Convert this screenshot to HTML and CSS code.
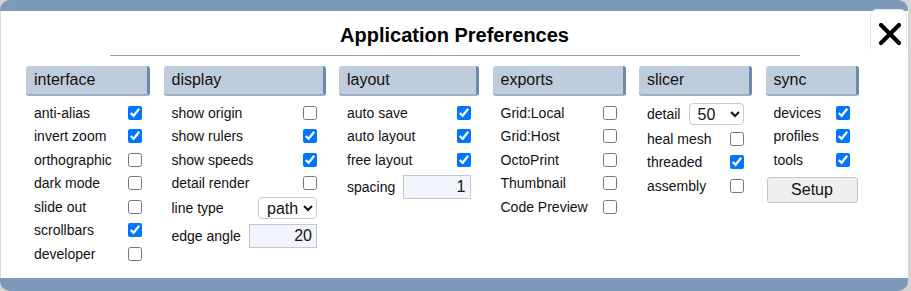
FILE: index.html
```html
<!DOCTYPE html>
<html lang="en">
<head>
  <meta charset="UTF-8" />
  <title>Application Preferences</title>
  <link rel="stylesheet" href="styles.css">
</head>
<body>
  <div class="screen">
    <div class="dialog">
      <button class="close" title="close">
        <svg width="24" height="24" viewBox="0 0 24 24"><path d="M3 3 L21 21 M21 3 L3 21" stroke="#000" stroke-width="4.2" stroke-linecap="round" fill="none"/></svg>
      </button>
      <h1 class="title">Application Preferences</h1>
      <hr class="rule">

      <div class="prefs">
        <div class="group">
          <div class="group-head">interface</div>
          <label class="row"><span>anti-alias</span><input type="checkbox" checked></label>
          <label class="row"><span>invert zoom</span><input type="checkbox" checked></label>
          <label class="row"><span>orthographic</span><input type="checkbox"></label>
          <label class="row"><span>dark mode</span><input type="checkbox"></label>
          <label class="row"><span>slide out</span><input type="checkbox"></label>
          <label class="row"><span>scrollbars</span><input type="checkbox" checked></label>
          <label class="row"><span>developer</span><input type="checkbox"></label>
        </div>

        <div class="group">
          <div class="group-head">display</div>
          <label class="row"><span>show origin</span><input type="checkbox"></label>
          <label class="row"><span>show rulers</span><input type="checkbox" checked></label>
          <label class="row"><span>show speeds</span><input type="checkbox" checked></label>
          <label class="row"><span>detail render</span><input type="checkbox"></label>
          <label class="row tall"><span>line type</span>
            <select class="pick pick-path"><option>path</option><option>flat</option><option>line</option></select>
          </label>
          <label class="row field"><span>edge angle</span><input class="num" type="text" value="20"></label>
        </div>

        <div class="group">
          <div class="group-head">layout</div>
          <label class="row"><span>auto save</span><input type="checkbox" checked></label>
          <label class="row"><span>auto layout</span><input type="checkbox" checked></label>
          <label class="row"><span>free layout</span><input type="checkbox" checked></label>
          <label class="row field"><span>spacing</span><input class="num" type="text" value="1"></label>
        </div>

        <div class="group">
          <div class="group-head">exports</div>
          <label class="row"><span>Grid:Local</span><input type="checkbox"></label>
          <label class="row"><span>Grid:Host</span><input type="checkbox"></label>
          <label class="row"><span>OctoPrint</span><input type="checkbox"></label>
          <label class="row"><span>Thumbnail</span><input type="checkbox"></label>
          <label class="row"><span>Code Preview</span><input type="checkbox"></label>
        </div>

        <div class="group">
          <div class="group-head">slicer</div>
          <label class="row tall"><span>detail</span>
            <select class="pick pick-detail"><option>50</option><option>75</option><option>100</option></select>
          </label>
          <label class="row"><span>heal mesh</span><input type="checkbox"></label>
          <label class="row"><span>threaded</span><input type="checkbox" checked></label>
          <label class="row"><span>assembly</span><input type="checkbox"></label>
        </div>

        <div class="group">
          <div class="group-head">sync</div>
          <label class="row"><span>devices</span><input type="checkbox" checked></label>
          <label class="row"><span>profiles</span><input type="checkbox" checked></label>
          <label class="row"><span>tools</span><input type="checkbox" checked></label>
          <button class="setup">Setup</button>
        </div>
      </div>
    </div>
  </div>
</body>
</html>
```

FILE: styles.css
```css
* { box-sizing: border-box; }
html, body { margin: 0; padding: 0; }
body { background: #d4d4d4; font-family: "Liberation Sans", Arial, sans-serif; color: #111; overflow: hidden; }

.screen { width: 908px; height: 291px; background: #7e9aba; border-radius: 10px; padding: 11px 0 13px; }
.dialog { position: relative; height: 267px; background: #fff; border-left: 1px solid #d9d9d9; padding-top: 13px; }

.close { position: absolute; top: -2px; right: 1px; width: 37px; height: 40px; padding: 9px 0 0 7px; background: #fff; border: 1px solid #e6e6e6; border-bottom: 0; border-radius: 7px 7px 0 0; cursor: pointer; text-align: left; }
.close svg { display: block; }

.title { margin: 0; font-size: 20px; font-weight: bold; line-height: 23px; text-align: center; color: #000; }
.rule { width: 690px; height: 0; margin: 8px auto 0; border: 0; border-top: 1px solid #a3a3a3; }

.prefs { display: grid; grid-template-columns: 124px 162px 140px 133px 113px 93px; column-gap: 13.5px; align-items: start; margin: 10px 0 0 25px; }

.group-head { height: 30px; margin-bottom: 5px; padding-left: 8px; background: #bfccdc; border-right: 3px solid #6c8ab0; border-bottom: 2px solid #9aaec7; border-radius: 3px; font-size: 16px; line-height: 28px; color: #111; }

.row { display: flex; align-items: center; justify-content: space-between; height: 23.5px; padding: 0 8.5px 0 8px; font-size: 14px; white-space: nowrap; }
.row.tall { height: 26px; }
.row.field { height: 30px; }
.row input[type=checkbox] { width: 14px; height: 14px; margin: 0; }

.pick { height: 22px; padding: 0 2px 0 4px; font-family: "Liberation Sans", Arial, sans-serif; font-size: 16px; color: #111; background: #fff; border: 1px solid #c9c9c9; border-radius: 4px; }
.pick-path { width: 59px; }
.pick-detail { width: 55px; }

.num { width: 68px; height: 24px; padding: 0 4px; font-family: "Liberation Sans", Arial, sans-serif; font-size: 16px; color: #111; text-align: right; background: #f1f4fb; border: 1px solid #c8c8c8; border-radius: 0; }

.setup { display: block; width: 91px; height: 26px; margin: 5px 0 0 1px; font-family: "Liberation Sans", Arial, sans-serif; font-size: 16px; color: #111; background: #efefef; border: 1px solid #c6c6c6; border-radius: 3px; }
```
